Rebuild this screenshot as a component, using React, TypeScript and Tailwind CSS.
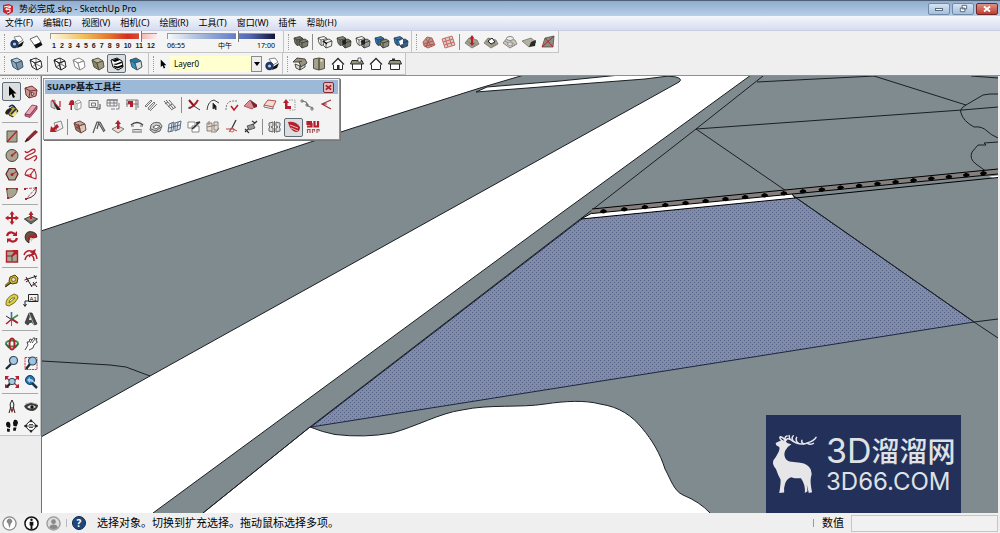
import { useState, type ReactNode } from "react";

const RED = "#b3202c";
const INK = "#2b2b2b";
const TAN = "#a9a48f";

type BoxProps = { fill?: string; top?: string; side?: string; stroke?: string };

function Box({ fill = "none", top = fill, side = fill, stroke = INK }: BoxProps) {
  return (
    <g stroke={stroke} strokeWidth="1" strokeLinejoin="round">
      <path d="M2 4 7 7 9 14 4 11Z" fill={fill} />
      <path d="M2 4 8 2 13 5 7 7Z" fill={top} />
      <path d="M7 7 13 5 14 11 9 14Z" fill={side} />
    </g>
  );
}

function Pair({ a, b, line = "#33362f" }: { a: string; b: string; line?: string }) {
  return (
    <g stroke={line} strokeWidth="0.8" strokeLinejoin="round">
      <path d="M1 4 7 2.500 10 4.500 10 10 4 11.500 2 9Z" fill={a} />
      <path d="M1 4 4 6 10 4.500M4 6V11" fill="none" />
      <path d="M6 7 12 5 15 7 14.500 12 9 14 6.500 11.500Z" fill={b} />
      <path d="M6 7 9 9 15 7M9 9V14" fill="none" />
    </g>
  );
}

function Terrain({ children, fill = "#a5a191" }: { children?: ReactNode; fill?: string }) {
  return (
    <g>
      <path d="M1 9 5 4 13 6 15 10 8 14Z" fill={fill} stroke="#6b675c" strokeWidth="0.7" />
      <path d="M3 7 11 12M5 4 13 11" stroke="#77736a" strokeWidth="0.6" />
      {children}
    </g>
  );
}

function House({ roof, door }: { roof: ReactNode; door?: boolean }) {
  return (
    <g>
      <path d="M3.500 8V13.500H12.500V8" fill="#fff" stroke={INK} />
      {roof}
      {door && <path d="M7 9h2.500v4.500H7z" fill={INK} />}
    </g>
  );
}

const icons: Record<string, ReactNode> = {
  dateShadow: (
    <g>
      <path d="M5 3 11 2 14 6 9 9Z" fill="#fff" stroke="#888" />
      <path d="M9 11 15 7 13 12 8 14Z" fill="#111" />
      <circle cx="5.500" cy="10" r="4.200" fill="#1f3864" />
      <circle cx="5.500" cy="10" r="1.600" fill="#b8cbe6" />
    </g>
  ),
  shadow: (
    <g>
      <path d="M2 5 9 2 13 8 7 12Z" fill="#fff" stroke="#666" />
      <path d="M6 11 13 8 14.500 11 8 14.500Z" fill="#111" />
    </g>
  ),
  xray: <Box fill="#8ea9bd" top="#b7cbd8" side="#7895ab" stroke="#40596c" />,
  backEdges: <g><Box fill="#fff" /><path d="M4 11 8 8 14 11M8 8V2" stroke={INK} strokeWidth="0.6" /></g>,
  wireframe: <g><Box /><path d="M4 11 9 8 14 11M9 8 8 2" stroke={INK} strokeWidth="0.7" fill="none" /></g>,
  hidden: <Box fill="#fff" stroke="#888" />,
  shaded: <Box fill="#88846b" top="#bdb99f" side="#9e9a80" stroke="#55523f" />,
  textured: (
    <g>
      <path d="M2 4 8 2 13 5 14 11 9 14 4 11Z" fill="#fff" stroke="#111" />
      <path d="M3 4.500 8 2.500 11 4 6 6ZM4 8 7 9 13 7 12.500 5.500 7.500 7.500ZM5 11 8.500 12.500 14 10.500V8.500L8.500 10.500 4.500 9.500Z" fill="#000" />
    </g>
  ),
  mono: <Box fill="#2f93c4" top="#2577a2" side="#d8ded8" stroke="#3a5565" />,
  pairShell: <Pair a="#74776a" b="#7c7f6e" />,
  pairWire: <g><Pair a="#fff" b="#eee" /><path d="M6 7 10 10" stroke="#111" strokeWidth="1.500" /></g>,
  pairUnion: <g><Pair a="#8b8d80" b="#73766a" /><path d="M6 7 10 5 10 10 7 11Z" fill="#222" /></g>,
  pairTrim: <g><Pair a="#fff" b="#999" /><path d="M6 7 10 5 10 10 7 11Z" fill="#222" /></g>,
  pairBlue: <Pair a="#2f7bc4" b="#8a8a78" />,
  pairSplit: <g><Pair a="#2f7bc4" b="#2e5f95" /><path d="M6 7 10 5 10 10 7 11Z" fill="#fff" /></g>,
  contours: (
    <g stroke="#b5443f" strokeWidth="0.8">
      <path d="M2 8 6 3 11 4 14 11 7 14 3 12Z" fill="#b89a90" />
      <path d="M3 10 12 7M4 12 13 10M5 5 11 13M9 4 5 13" fill="none" />
    </g>
  ),
  scratch: (
    <g stroke="#c05450" strokeWidth="0.8" fill="#dccbc2">
      <path d="M2 5 12 2 15 11 5 14Z" />
      <path d="M3 8 13 5M4 11 14 8M5 4 8 13M9 3 12 12" fill="none" />
    </g>
  ),
  smoove: <Terrain><path d="M8 1 10.500 4.500H9V9h1.500L8 12 5.500 9H7V4.500H5.500Z" fill={RED} /></Terrain>,
  stamp: <Terrain><path d="M5 7 9 4 12 8 8 10Z" fill="#fff" stroke="#222" /></Terrain>,
  drape: <Terrain fill="#cbc7bd"><ellipse cx="8" cy="4.500" rx="3.500" ry="2" fill="#eee" stroke="#888" /><path d="M5 10 8 8 11 10 8 12Z" fill="#ddd" stroke="#888" strokeWidth="0.7" /></Terrain>,
  detail: <g><path d="M1 7 10 4 15 8 8 13Z" fill="#b5b1a0" stroke="#666" strokeWidth="0.7" /><path d="M8 13 10 8 15 6 14 12Z" fill="#2a2a24" /></g>,
  flip: <g><path d="M2 13 5 4 14 2 13 13Z" fill="#8f8b80" stroke="#444" strokeWidth="0.7" /><path d="M2 13 14 2M5 4 13 13" stroke={RED} /></g>,
  iso: (
    <g stroke="#3b3b33" strokeWidth="0.9">
      <path d="M3 8 8 10V14L4 12ZM8 10 13 7V11L8 14Z" fill="#ddd" />
      <path d="M1 6 5 2 13 3 15 7 9 11 7 6Z" fill="#96927d" />
      <path d="M7 6 10 5" />
    </g>
  ),
  topView: <g><path d="M2.500 3 8 2V14L2.500 12.500ZM13.500 3 8 2V14L13.500 12.500Z" fill="#a5a28c" stroke="#56543f" /><path d="M9.500 3.500h2v2h-2z" fill="#eee" /></g>,
  front: <House door roof={<path d="M2 8.500 8 2.500 14 8.500" fill="#fff" stroke={INK} strokeWidth="1.300" />} />,
  right: <House roof={<g><path d="M1.500 8 3 4.500H13L14.500 8Z" fill="#98957f" stroke={INK} /><path d="M9 2h3v4H9z" fill="#fff" stroke={INK} strokeWidth="0.7" /></g>} />,
  back: <House roof={<path d="M2 8.500 8 2.500 14 8.500" fill="#fff" stroke={INK} strokeWidth="1.300" />} />,
  left: <House roof={<g><path d="M1.500 8 3 4.500H13L14.500 8Z" fill="#98957f" stroke={INK} /><path d="M5 2.500h3v2H5z" fill={INK} /></g>} />,
  select: <path d="M5 2V12L7.500 10 9 14 11 13 9.300 9.500H12.500Z" fill="#000" />,
  component: (
    <g stroke="#6e2528" strokeWidth="0.9">
      <path d="M2 4 9 2 14 6 13 12 6 14 3 11Z" fill="#c99a95" />
      <path d="M2 4 7 7 14 6M7 7 6 14" fill="none" />
      <path d="M8 8 11 9.500 9 12Z" fill="#fff" />
    </g>
  ),
  paint: (
    <g>
      <path d="M4 7 10 3 14 8 9 14 5 12Z" fill="#b5a53a" stroke="#222" />
      <path d="M1 10Q3 4 8 6L6 9 3 12Z" fill="#222" />
      <path d="M5 4Q9 0 11 5M7 11 12 6" stroke="#1c2b52" fill="none" strokeWidth="1.400" />
      <path d="M8 12 12 8 13 10 10 14Z" fill="#f2e78d" />
    </g>
  ),
  eraser: <g stroke="#7c3148" strokeWidth="0.8"><path d="M2 11 9 2 14 3 7 12Z" fill="#e8a5b5" /><path d="M2 11 7 12 14 3V6L7 14.500 2 13Z" fill="#c76883" /></g>,
  rect: <g><path d="M3 3h10v11H3z" fill={TAN} stroke="#55523f" /><path d="M3 14 13 3" stroke={RED} strokeWidth="1.200" /></g>,
  pencil: <g><path d="M2 14 4 10.500 12 2.500 14.500 4 6 12Z" fill="#a0222b" stroke="#4a1518" strokeWidth="0.7" /><path d="M2 14 4 10.500 6 12Z" fill="#222" /></g>,
  circle: <g><circle cx="8" cy="8.500" r="6" fill={TAN} stroke="#444" /><path d="M8 8.500 12 5" stroke={RED} strokeWidth="1.200" /><circle cx="8" cy="8.500" r="1.200" fill={RED} /></g>,
  freehand: <path d="M2 4Q3 7 7 4T12 3Q13 5 8 7T2 11Q3 14 8 11T13 9Q15 11 11 14" fill="none" stroke={RED} strokeWidth="1.300" />,
  polygon: <g><path d="M5 2.500H11L14 8 11 14H5L2 8Z" fill={TAN} stroke="#5d2727" strokeWidth="1.200" /><path d="M8 8.500 12 6" stroke={RED} /><circle cx="8" cy="8.500" r="1.500" fill={RED} /></g>,
  arc: <g fill="none" stroke={RED} strokeWidth="1.100"><path d="M2 9Q3 3 8 2.500Q14 3 13 13M2 9 13 13M2 9 7 9 12 3M8 8V11" /></g>,
  pie: <g><path d="M2.500 3.500H13.500Q13 12 4 13.500Z" fill={TAN} stroke="#6d5a4a" /><path d="M2 3h2v2H2zM12 3h2v2h-2zM3 12h2v2H3z" fill={RED} /></g>,
  arc2: <g fill="none" stroke={RED}><path d="M13 3Q15 11 3 14" stroke="#333" /><path d="M2 3.500 13 3 3 14" strokeDasharray="3 1" strokeWidth="0.8" /><path d="M12 2h2v2h-2zM2 13h2v2H2zM1 3h2v2H1z" fill={RED} stroke="none" /></g>,
  move: <path d="M8 1 10.500 4.500H5.500ZM8 15 5.500 11.500H10.500ZM1 8 4.500 5.500V10.500ZM15 8 11.500 10.500V5.500ZM7 4h2v8H7zM4 7h8v2H4z" fill={RED} />,
  pushpull: <g><path d="M1.500 9 8 6 14.500 9 8 14Z" fill="#918e7a" stroke="#444" /><path d="M1.500 9 8 12 14.500 9M8 12v2" fill="none" stroke="#444" strokeWidth="0.8" /><path d="M8 1 10.500 5H9V9H7V5H5.500Z" fill={RED} /></g>,
  rotate: <g fill="none" stroke={RED} strokeWidth="2.200"><path d="M3 7Q4 3 8 3.500L11 5M13 9Q12 13 8 12.500L5 11" /><path d="M13 2V7H8.500ZM3 14V9.500H7.500Z" fill={RED} stroke="none" /></g>,
  follow: <g><path d="M2 8Q3 1 10 3Q14 4 14 8L9 9Q8 5 6 9V14Q2 12 2 8Z" fill="#6b5344" stroke="#2b211c" strokeWidth="0.8" /><path d="M5 10Q6 5 10 6L11 4 14 8 10 10V8Q8 7 7 11Z" fill={RED} /><path d="M7 9 11 9 8 13Z" fill="#cfcbb9" /></g>,
  scale: <g><path d="M2.500 3h11v11h-11z" fill={TAN} stroke={RED} strokeWidth="1.400" /><path d="M3 8H8V13" fill="none" stroke="#444" /><path d="M14 2V8L12 6 8 9 7 8 10 4 8 2Z" fill={RED} /></g>,
  offset: <g fill="none" stroke={RED} strokeWidth="1.500"><path d="M1 7Q3 2 8 3T14 11M2 12Q3 7 7 7T11 13" /><path d="M6 9 10 5M8 4 12 2 11 6Z" fill={RED} strokeWidth="1.200" /></g>,
  tape: <g><path d="M6 4 11 2 14 5 13 10 8 11 5 8Z" fill="#c9b23b" stroke="#4e4415" /><circle cx="9.500" cy="6.500" r="2" fill="#eee3a0" stroke="#544" strokeWidth="0.7" /><path d="M6 9 1.500 13" stroke="#8c7a22" strokeWidth="2.500" /><path d="M1 14 7 10" stroke="#222" /></g>,
  dimension: <g stroke="#222" fill="none" strokeWidth="1"><path d="M3 4 9 14M1.500 7 14 3M3 9 6 7M8 13 14 9M11 2 13 6M10 9 14 14" /><path d="M3 6 5 6M11 10V13" stroke={RED} /></g>,
  protractor: <path d="M2 13Q1 6 10 2Q15 3 14 6Q12 11 5 14ZM5 11 11 6 8 6Q5 8 5 11Z" fill="#dccf43" fillRule="evenodd" stroke="#5d5619" strokeWidth="0.8" />,
  label: <g><path d="M5.500 2.500h9.500v7H5.500zM5 9H2V14M0.500 12 2 14.500 3.500 12" fill="none" stroke="#222" /><text x="6.500" y="8.500" fontSize="6" className="font-['Liberation_Sans']" fill="#111">A1</text></g>,
  axes: <g strokeWidth="1.600"><path d="M7.500 9V1" stroke="#3873a5" /><path d="M2 5 13 12" stroke="#2a2a2a" strokeWidth="1" /><path d="M8 8 14 4" stroke="#2f9a47" /><path d="M8 8 2 13M8 8 14 12" stroke={RED} /><path d="M7.500 15V9" stroke="#3873a5" strokeWidth="1" /></g>,
  text3d: <g><path d="M2 12 6 2 9 2 14 13 11 14 9 11 6 12 5 14Z" fill="#4a4a4a" stroke="#222" strokeWidth="0.7" /><path d="M6 9 7 5 9 9Z" fill="#eee" /><path d="M6 2 11 14" stroke="#aaa" /></g>,
  orbit: <g fill="none" strokeWidth="2"><ellipse cx="8" cy="7.500" rx="6" ry="3" stroke="#3e8d46" /><ellipse cx="8" cy="8" rx="2.500" ry="5.500" stroke={RED} /><path d="M2 8 5 12M11 12 14 8" stroke="#26663a" strokeWidth="1.300" /></g>,
  pan: <path d="M2 14 5 9 4 6 6 6 7 3 9 4 11 1.500 12 3 14 2.500 13 5 14.500 6 11 9 10 12 6 14M7 7 9 4M9 7 12 3" fill="#fff" stroke="#222" strokeWidth="0.8" />,
  zoom: <g><path d="M2 14 7 9" stroke="#202b39" strokeWidth="2.400" /><circle cx="9.500" cy="5.500" r="4" fill="#a6c8e2" stroke="#33475b" strokeWidth="1.200" /></g>,
  zoomWindow: <g><path d="M2 2.500h12v12H2z" fill="none" stroke="#d3343d" strokeDasharray="2 0.700" /><path d="M3 14 7 9" stroke="#202b39" strokeWidth="2.400" /><circle cx="9.500" cy="6" r="4" fill="#9dc3df" stroke="#33475b" strokeWidth="1.200" /></g>,
  extents: <g><path d="M1 2 5 2 3.500 4 6 6 5 7 3 5 1 6ZM15 2 11 2 12.500 4 10 6 11 7 13 5 15 6ZM1 14 5 14 3.500 12 6 10 5 9 3 11 1 10ZM15 14 11 14 12.500 12 10 10 11 9 13 11 15 10Z" fill={RED} /><circle cx="8" cy="7.500" r="3.200" fill="#a6c8e2" stroke="#33475b" /><path d="M3 13 6 10" stroke="#222" strokeWidth="1.800" /></g>,
  previous: <g><circle cx="7" cy="6" r="4.500" fill="#2674ae" stroke="#163b5c" /><path d="M9 9 14 14" stroke="#173450" strokeWidth="2.500" /><path d="M4 6 7 3V5Q11 5 11 9Q9 7 7 7.500V9Z" fill="#a5d1ed" /></g>,
  position: <g fill="none" stroke="#222"><path d="M8 1Q11 5 9.500 9H6.500Q5 5 8 1Z" fill="#eee" /><path d="M6.500 9 5 14M9.500 9 11 14" /><path d="M6 10 8 14 10 10Z" fill={RED} stroke="none" /></g>,
  look: <g><path d="M1 7Q7 1 15 6Q15 10 10 12Q3 12 1 7Z" fill="#3a3a38" /><path d="M4 8Q9 4 13 8Q8 11 4 8Z" fill="#e5e5e0" /><circle cx="9" cy="8" r="1.700" fill="#111" /><path d="M2 5Q8 2 14 5" stroke="#bbb" fill="none" /></g>,
  walk: <g fill="#111"><path d="M3 4Q6 3 6.500 7L6 10 3 9Q1 6 3 4ZM3 10.500 6 11 5.500 14 3 13.500ZM10 2Q13.500 1 14 5L12.500 8.500 9.500 8Q8.500 4 10 2ZM9.500 9.500H12.500L11.500 13 9 12.500Z" /></g>,
  section: <g fill="none" stroke="#222"><circle cx="8" cy="8" r="4.500" fill="#fff" /><path d="M8 1 10 3.500H6ZM8 15 10 12.500H6ZM1 8 3.500 6V10ZM15 8 12.500 6V10Z" fill="#222" stroke="none" /><path d="M1 8H15M6 6.500H10M6 9.500H10" strokeWidth="0.8" /></g>,
  suDraw: <g><path d="M3 4 7 3 7 12 3 10Z" fill="#ccc" stroke="#666" strokeWidth="0.7" /><path d="M4 3 12 12M12 4V10" stroke={RED} strokeWidth="1.200" /><path d="M5 5 13 13 9 13Z" fill="#222" /></g>,
  suPull: <g><path d="M3 4Q5 2 7 4V8H5V13H3.500V8L1.500 8Z" fill={RED} /><path d="M8 5 12 3 14 5V11L10 13 8 12ZM8 5 10 7 14 5M10 7V13" fill="#fff" stroke="#999" /></g>,
  suOffset: <g fill="none" stroke="#777"><path d="M3 3.500h9v7H3zM5.500 6h4v3h-4z" /><path d="M10 12H14V7" stroke="#444" /></g>,
  suGrid: <g fill="none" stroke="#777" strokeWidth="0.9"><path d="M2 3H12V9H2ZM2 6H12M5 3V9M9 3V9M11 12H14V6M6 12H10" /><path d="M2 3H13" stroke="#7b8699" strokeWidth="1.500" /></g>,
  suRail: <g stroke="#777" fill="none"><path d="M2 3H14M2 7H14M3 3V10M12 3V13M14 3V11" /><path d="M4 4H9V10H6V7H4Z" fill={RED} stroke="none" /></g>,
  suStair: <g stroke="#777" fill="#e8e8e8"><path d="M2 9 8 3 9 4 3 10ZM5 11 11 5 12 6 6 13ZM7 14 14 7" /></g>,
  suSteps: <path d="M2 4 9 12M4 3 11 11M7 3 13 10M3 7 6 5M6 10 10 7M9 13 14 10" fill="none" stroke="#666" />,
  suTrim: <g fill="none"><path d="M3 11Q8 10 12 3" stroke={RED} strokeWidth="2" /><path d="M3 3 8 9" stroke="#8f1820" strokeWidth="2" /><path d="M8 9 14 13M2 11 5 11" stroke="#444" /></g>,
  suArc: <g fill="none" stroke="#444"><path d="M2 13Q3 4 9 3L14 6" /><path d="M8 6V12L9.500 11 11 13 11 9Z" fill="#111" /></g>,
  suFillet: <g fill="none"><path d="M2 13Q2 4 9 4H13" stroke="#777" strokeDasharray="2 1" /><path d="M7 9 10 13 14 8" stroke={RED} strokeWidth="1.500" /></g>,
  suRoof: <g><path d="M1 9 7 3 14 8 9 12Z" fill="#dd8d95" stroke="#a13c43" strokeWidth="0.8" /><path d="M7 3 11 11 14 10 14 8Z" fill="#702a2d" /></g>,
  suFace: <g><path d="M2 8 6 3 14 4 11 10Z" fill="#f3dad2" stroke="#b0504a" /><path d="M2 8V10L11 12V10" fill="none" stroke="#777" /></g>,
  suUp: <g><path d="M8 3H14V13H8" fill="none" stroke="#999" strokeDasharray="1.500 1" /><path d="M2 6 5 2 8 6H6.500V9H10V12H4V6Z" fill={RED} /></g>,
  suWeld: <g fill="none" stroke="#777"><path d="M2 4 6 5 8 9 13 11" strokeWidth="1.200" /><path d="M1 3h2v2H1zM6 7h2v2H6zM11 11h2v2h-2z" stroke="#666" strokeWidth="0.8" /></g>,
  suOpen: <path d="M12 3 3 7 12 12M3 7 8 7" fill="none" stroke="#9f3438" strokeWidth="1.200" />,
  suBack: <g><path d="M6 4 13 2 15 9 9 12Z" fill="#eee" stroke="#888" /><path d="M2 13 3 7 5 9 9 5 11 8 7 11 9 13Z" fill={RED} /></g>,
  suBox: <g><Box fill="#907f6c" top="#c9a5a0" side="#d8c8b5" stroke="#6d4842" /><path d="M4 8 8 10 6 5" stroke="#8b2d30" fill="none" /></g>,
  suLines: <path d="M2 14 6 3 8 3 6 10M7 3 13 13M9 3 14 12" fill="none" stroke="#555" strokeWidth="1.200" />,
  suDrop: <g><path d="M2 10 8 7 14 10 8 14Z" fill="#e3ded0" stroke="#777" /><path d="M8 1 11 5H9.500V10H7V5H5Z" fill={RED} /></g>,
  suBridge: <g fill="none" stroke="#444"><path d="M2 6Q8 1 14 6" strokeWidth="1.500" /><path d="M2 7H5M11 7H14M3 11Q8 10 13 11M3 13H13" strokeWidth="0.8" /></g>,
  suTorus: <g stroke="#555" fill="#ccc" strokeWidth="0.9"><path d="M3 6Q6 2 12 4L14 7 12 12 6 14 2 11Z" /><path d="M5 8Q8 5 12 7L8 10Z" fill="#fff" /><path d="M3 10 8 12 13 8" fill="none" /></g>,
  suMesh: <path d="M2 5 7 3 6 12 1 13ZM8 4 14 2 13 10 8 12ZM2 9 13 6M5 4 4 12M11 3 10 11" fill="#e6eaef" stroke="#4b6078" strokeWidth="0.900" />,
  suCopy: <g fill="#fff" stroke="#888"><path d="M2 3h7v6H2zM6 7h7v6H6z" /><path d="M6 10 14 3M14 3 10 4" stroke="#333" strokeWidth="1.400" /></g>,
  suArray: <path d="M2 4h5v8H2zM9 3h4v8H9zM4 2V6M2 8 12 6M6 13H11L14 9" fill="#e5ddd5" stroke="#8b8179" />,
  suAxis: <g fill="none"><path d="M12 1 8 9" stroke="#333" strokeWidth="1.300" /><path d="M2 10H9L13 12M8 9 5 13" stroke="#b54742" /><circle cx="8" cy="11" r="2" stroke="#b54742" strokeWidth="0.8" /></g>,
  suBolt: <g stroke="#333"><path d="M2 13 13 3M9 2 12 4 14 2M2 10 6 14" fill="none" strokeWidth="1.200" /><path d="M4 7 10 5 12 9 6 11Z" fill="#999" strokeWidth="0.7" /></g>,
  suMirror: <path d="M7.500 2V14M2 4 6 3V7L4 8 6 9V13L2 12V9L3 8 2 7ZM9 3 13 4V7L12 8 13 9V12L9 13V9L11 8 9 7Z" fill="#ddd" stroke="#666" />,
  suHide: <g><path d="M2 3Q10 2 14 8Q14 13 10 13Q4 12 2 3Z" fill={RED} /><path d="M4 6 12 9M5 9 12 12" stroke="#f1bcbc" fill="none" /></g>,
  suApp: <g><path d="M7 3H2.500V5H6.500V7.500H2M9.500 2V7.500H13V2" fill="none" stroke={RED} strokeWidth="2.200" /><path d="M2.500 14V10.500H5V14M7.500 14V10.500H9.500V12.500M12 14V10.500H14V12.500" fill="none" stroke="#a55" strokeWidth="1.200" /></g>,
};

function Icon({ name }: { name: string }) {
  return (
    <svg viewBox="0 0 16 16" className="size-4 shrink-0" fill="none" aria-hidden="true">
      {icons[name]}
    </svg>
  );
}

// "|" in a tool list is a separator
function Tools({ names, active }: { names: string[]; active?: string }) {
  return (
    <>
      {names.map((name, i) =>
        name === "|" ? (
          <span key={i} className="mx-0.5 h-4 w-px shrink-0 bg-[#8c8c8c]" />
        ) : (
          <button
            key={i}
            type="button"
            aria-label={name}
            className={
              name === active
                ? "flex size-[19px] shrink-0 items-center justify-center rounded-xs border border-[#5f6b75] bg-[#dcdddf]"
                : "flex size-[19px] shrink-0 items-center justify-center"
            }
          >
            <Icon name={name} />
          </button>
        )
      )}
    </>
  );
}

function Toolbar({ children }: { children: ReactNode }) {
  return (
    <div className="flex h-[22px] items-center border-r border-b border-[#c4c4c4] bg-[#f4f4f4] pr-px">
      <span className="mr-0.5 ml-1 h-4 w-px border-l border-dotted border-[#9a9a9a]" />
      {children}
    </div>
  );
}

const thumb =
  "[&::-webkit-slider-thumb]:h-[11px] [&::-webkit-slider-thumb]:w-[3px] [&::-webkit-slider-thumb]:appearance-none [&::-webkit-slider-thumb]:border-r [&::-webkit-slider-thumb]:border-[#777] [&::-webkit-slider-thumb]:bg-white";

function ShadowSliders() {
  const [month, setMonth] = useState(85);
  const [hour, setHour] = useState(65);

  return (
    <>
      <div className="ml-[5px] w-[107px]">
        <input
          type="range"
          aria-label="日期"
          value={month}
          onChange={(e) => setMonth(Number(e.target.value))}
          className={`block h-[6px] w-full appearance-none border-t border-l border-[#999] bg-[linear-gradient(90deg,#fdf8e6,#efc260_30%,#e2762f_55%,#d5301f_72%,#dc4a3c_84%,#f3b9b6_86%,#fbeeee)] ${thumb}`}
        />
        <div className="flex justify-between px-0.5 pt-[3px] font-['Liberation_Sans'] text-[7px] leading-[8px] font-bold text-[#222]">
          {Array.from({ length: 12 }, (_, i) => (
            <span key={i}>{i + 1}</span>
          ))}
        </div>
      </div>
      <div className="ml-[10px] w-[108px]">
        <input
          type="range"
          aria-label="时间"
          value={hour}
          onChange={(e) => setHour(Number(e.target.value))}
          className={`block h-[6px] w-full appearance-none border-t border-l border-[#999] bg-[linear-gradient(90deg,#f5f8fb,#a8bbd9_30%,#6b82cb_60%,#5668b4_76%,#10143a)] ${thumb}`}
        />
        <div className="flex justify-between pt-[3px] text-[7px] leading-[8px] text-black">
          <span>06:55</span>
          <span className="pl-2">中午</span>
          <span>17:00</span>
        </div>
      </div>
      <span className="w-[7px]" />
    </>
  );
}

const sideGroups = [
  ["select", "component", "paint", "eraser"],
  ["rect", "pencil", "circle", "freehand", "polygon", "arc", "pie", "arc2"],
  ["move", "pushpull", "rotate", "follow", "scale", "offset"],
  ["tape", "dimension", "protractor", "label", "axes", "text3d"],
  ["orbit", "pan", "zoom", "zoomWindow", "extents", "previous"],
  ["position", "look", "walk", "section"],
];

function SideBar() {
  return (
    <aside className="w-[42px] shrink-0 border-r border-[#6c7479] bg-[#ededed]">
      <div className="border-r border-b border-[#c4c4c4] bg-[#f4f4f4] pt-0.5 pl-0.5">
        <div className="mr-0.5 mb-[3px] h-px border-t border-dotted border-[#9a9a9a]" />
        {sideGroups.map((group, i) => (
          <div key={i}>
            {i > 0 && <div className="my-0.5 mr-0.5 h-0.5 border-t border-[#a9a9a9]" />}
            <div className="grid grid-cols-[19px_19px]">
              <Tools names={group} active="select" />
            </div>
          </div>
        ))}
      </div>
    </aside>
  );
}

const suappRows = [
  ["suDraw", "suPull", "suOffset", "suGrid", "suRail", "suStair", "suSteps", "|", "suTrim", "suArc", "suFillet", "suRoof", "suFace", "suUp", "suWeld", "suOpen"],
  ["suBack", "|", "suBox", "suLines", "suDrop", "suBridge", "suTorus", "suMesh", "suCopy", "suArray", "suAxis", "suBolt", "|", "suMirror", "suHide", "suApp"],
];

function SuappPanel() {
  return (
    <section className="absolute top-0.5 left-px border border-[#8d9296] bg-[#f3f3f3] p-px shadow-[1px_1px_0_#777]">
      <header className="flex h-[14px] items-center justify-between bg-[#9db9d8] pr-1 pl-0.5">
        <h2 className="text-[9px] leading-[14px] font-bold text-[#101828]">SUAPP基本工具栏</h2>
        <button type="button" aria-label="关闭" className="flex size-[11px] items-center justify-center rounded-xs border border-[#7d2f35] bg-[#e5b9b9]">
          <svg viewBox="0 0 8 8" className="size-[7px]"><path d="M1 1.500 7 6.500M7 1.500 1 6.500" stroke="#a1222b" strokeWidth="2" /></svg>
        </button>
      </header>
      {suappRows.map((row, i) => (
        <div key={i} className="flex h-[22px] items-center pr-0.5 pl-px">
          <Tools names={row} active="suHide" />
        </div>
      ))}
    </section>
  );
}

const posts = Array.from({ length: 21 }, (_, i) => {
  const x = 603 + i * 20.9 - i * i * 0.095;
  return { x, y: 211 - (x - 603) * 0.1 };
});

function Scene() {
  return (
    <svg viewBox="42 76 956 437" preserveAspectRatio="xMinYMin slice" className="absolute inset-0 size-full" aria-hidden="true">
      <defs>
        <pattern id="dots" width="4" height="4" patternUnits="userSpaceOnUse">
          <rect width="4" height="4" fill="#808ca6" />
          <rect width="1" height="1" fill="#586389" />
          <rect x="2" y="2" width="1" height="1" fill="#586389" />
        </pattern>
      </defs>
      <rect x="42" y="76" width="956" height="437" fill="#808b90" />
      <g fill="#fff" stroke="#1a1f22" strokeWidth="1" strokeLinejoin="round">
        <path d="M41 75V231L350 129 480 88 524 75Z" />
        <path d="M476 92 487 87 560 81 620 75H676L645 79 560 85.500Z" />
        <path d="M41 437 150 376 679 82Q683 79 676 77L660 75H751L560 214 153 513V520H41Z" />
        <path d="M310 427Q322 432 335 434.500Q365 438 392 433C415 427 440 413 462 410C490 404 520 408 545 404C565 401 585 400 600 404C620 407 632 416 642 428C652 440 660 453 665 469C671 480 674 491 683 495Q700 502 710 513V520H200L203 513Z" />
      </g>
      <path d="M583 218 795 197 974 322 311 427Z" fill="url(#dots)" stroke="#1d2540" />
      <g fill="none" stroke="#1a1f22" strokeWidth="1">
        <path d="M763 76 696 129 583 217 310 427 203 513" />
        <path d="M696 129 795 197 974 322 998 338M974 322 998 319" />
        <path d="M696 129 962 110 998 107M757 82 875 76M874 76 966 105M971 76 998 78" />
        <path d="M998 94H990L983 95 966 105Q959 109 961 113 963 121 974 127 982 126 987 131 991 135 998 138" />
        <path d="M998 142 984 143 986 145 978 145 972 152Q969 159 976 164L987 172" />
        <path d="M42 361 110 365 126 367 150 376" />
      </g>
      <path d="M592 209 998 169V174L590 214Z" fill="#85807d" />
      <path d="M581 219 591 213.500 792 194 795 198Z" fill="#fff" />
      <path d="M989 176.500 998 175.500V178L993 178Z" fill="#fff" />
      <g fill="none" stroke="#000" strokeWidth="1">
        <path d="M592 209 998 169M592 213.500 998 174M581 219 795 198 998 177.500M581 219 592 213M792 194 795 198" />
      </g>
      <g fill="#000">
        {posts.map((p) => (
          <path key={p.x} d={`M${p.x - 3} ${p.y}l3-2 3 1 1 1.500-3 2-3-.5z`} />
        ))}
      </g>
    </svg>
  );
}

function Watermark() {
  return (
    <div className="absolute right-[37px] bottom-0 flex h-[98px] w-[195px] items-center gap-2 bg-[#22305a] pl-1.5 text-[#dfe1e5]">
      <svg viewBox="66 96 140 186" className="h-[62px] w-[46px] shrink-0" fill="#e6e6e8" aria-hidden="true">
        <path d="M77 125 90 119 98 116 106 120 114 126 125 129 114 137 107 147Q100 160 107 172Q112 181 126 182L152 185Q176 188 184 206Q189 218 184 232Q182 246 188 275L178 277 172 252 174 272 166 277Q168 250 154 232Q140 234 124 229Q110 234 106 248Q101 262 103 276L88 277Q93 250 92 236Q84 222 78 204Q66 190 70 178Q78 168 84 156Q91 143 88 137L79 132Z" />
        <g fill="none" stroke="#e6e6e8" strokeWidth="4.500" strokeLinecap="round">
          <path d="M106 120Q112 107 123 115Q150 136 176 124Q194 118 200 108" />
          <path d="M96 118Q86 108 92 106Q104 110 106 120M108 118Q102 106 112 104M120 114 118 102M130 119Q124 108 131 103M146 126Q136 118 141 108M162 128Q154 122 157 117M174 126Q182 132 192 126" />
        </g>
      </svg>
      <div className="whitespace-nowrap">
        <div className="flex items-center leading-[34px]">
          <span className="font-['Inter'] text-[34px]">3D</span>
          <span className="text-[28px] font-medium">溜溜网</span>
        </div>
        <div className="mt-0.5 font-['Inter'] text-[24px] leading-[24px]">3D66.COM</div>
      </div>
    </div>
  );
}

const menus = ["文件(F)", "编辑(E)", "视图(V)", "相机(C)", "绘图(R)", "工具(T)", "窗口(W)", "插件", "帮助(H)"];

const winButton = "flex h-3 w-[22px] items-center justify-center rounded-xs border border-[#6f8aa8] bg-linear-to-b from-[#d5e3f2] to-[#a5bfdb]";

export default function App() {
  const [layer, setLayer] = useState("Layer0");

  return (
    <div className="flex h-screen flex-col overflow-hidden bg-[#efefef] font-['Noto_Sans','Noto_Sans_CJK_SC',sans-serif] text-black">
      <header className="flex h-4 shrink-0 items-center justify-between border-t border-[#4f6076] bg-linear-to-b from-[#8fadd0] to-[#b7cfe8] pl-0.5">
        <div className="flex items-center gap-1">
          <svg viewBox="0 0 12 12" className="size-3" aria-hidden="true">
            <path d="M1 2 7 1 11 3V9L6 12 1 9Z" fill="#c9252d" />
            <path d="M2 4 7 3 9 4 4 5.500V7L8 6V9L5 10" fill="none" stroke="#fff" strokeWidth="1" />
          </svg>
          <h1 className="pl-px text-[9px] leading-[14px]">势必完成.skp - SketchUp Pro</h1>
        </div>
        <div className="flex gap-0.5 pr-0.5">
          <button type="button" aria-label="最小化" className={winButton}>
            <span className="mt-0.5 h-[3px] w-2 border border-[#5c6b7d] bg-white" />
          </button>
          <button type="button" aria-label="还原" className={winButton}>
            <svg viewBox="0 0 10 10" className="size-[9px]"><path d="M3.500 1.500h5v4h-5zM1.500 4.500h5v4h-5z" fill="#fff" stroke="#4f5f73" /></svg>
          </button>
          <button type="button" aria-label="关闭" className="flex h-3 w-[22px] items-center justify-center rounded-xs border border-[#70262a] bg-linear-to-b from-[#dc9186] to-[#bf3a2f]">
            <svg viewBox="0 0 8 8" className="size-2"><path d="M1 1.500 7 6.500M7 1.500 1 6.500" stroke="#fff" strokeWidth="1.800" /></svg>
          </button>
        </div>
      </header>

      <nav className="flex h-[15px] shrink-0 items-center gap-[10px] border-b border-[#c9cfdf] bg-linear-to-b from-[#f5f7fc] to-[#d6ddf0] pl-[5px]">
        {menus.map((m) => (
          <button key={m} type="button" className="text-[9px] leading-[14px]">{m}</button>
        ))}
      </nav>

      <div className="flex h-[22px] shrink-0">
        <Toolbar>
          <Tools names={["dateShadow", "shadow"]} />
          <ShadowSliders />
        </Toolbar>
        <Toolbar><Tools names={["pairShell", "|", "pairWire", "pairUnion", "pairTrim", "pairBlue", "pairSplit"]} /></Toolbar>
        <Toolbar><Tools names={["contours", "scratch", "|", "smoove", "stamp", "drape", "detail", "flip"]} /></Toolbar>
      </div>

      <div className="flex h-[22px] shrink-0">
        <Toolbar>
          <Tools names={["xray", "backEdges", "|", "wireframe", "hidden", "shaded", "textured", "mono"]} active="textured" />
          <span className="w-0.5" />
        </Toolbar>
        <Toolbar>
          <svg viewBox="0 0 16 16" className="mx-px size-3" aria-hidden="true">{icons.select}</svg>
          <div className="relative flex w-[92px]">
            <select
              aria-label="图层"
              value={layer}
              onChange={(e) => setLayer(e.target.value)}
              className="h-4 w-full appearance-none bg-[#ffffd0] pl-1 text-[8px] leading-[16px]"
            >
              <option>Layer0</option>
            </select>
            <span className="pointer-events-none absolute inset-y-0 right-0 flex w-[11px] items-center justify-center border border-[#8a8a8a] bg-[#eee]">
              <svg viewBox="0 0 6 4" className="h-1 w-1.5"><path d="M0 0H6L3 4Z" /></svg>
            </span>
          </div>
          <Tools names={["dateShadow"]} />
        </Toolbar>
        <Toolbar><Tools names={["iso", "topView", "front", "right", "back", "left"]} /></Toolbar>
      </div>

      <main className="flex min-h-0 flex-1 border-t border-[#8b9194] pr-0.5">
        <SideBar />
        <div className="relative min-w-0 flex-1 overflow-hidden">
          <Scene />
          <SuappPanel />
          <Watermark />
        </div>
      </main>

      <footer className="flex h-5 shrink-0 items-center justify-between pr-0.5 pl-0.5">
        <div className="flex items-center">
          <div className="flex items-center gap-[7px]">
            <svg viewBox="0 0 16 16" className="size-[15px]" aria-hidden="true">
              <circle cx="8" cy="8" r="7" fill="#fff" stroke="#888" strokeWidth="1.400" />
              <path d="M8 13 6.500 8A2.800 2.800 0 1 1 9.500 8Z" fill="#888" />
            </svg>
            <svg viewBox="0 0 16 16" className="size-[15px]" aria-hidden="true">
              <circle cx="8" cy="8" r="7" fill="#fff" stroke="#111" strokeWidth="1.600" />
              <circle cx="8" cy="4" r="1.300" fill="#111" />
              <path d="M6 6h4v4H9v4H7v-4H6z" fill="#111" />
            </svg>
            <svg viewBox="0 0 16 16" className="size-[15px]" aria-hidden="true">
              <circle cx="8" cy="8" r="7" fill="#ddd" stroke="#999" strokeWidth="1.400" />
              <circle cx="8" cy="6" r="2.500" fill="#888" />
              <path d="M3.500 12.500Q4 9 8 9T12.500 12.500Q8 15.500 3.500 12.500Z" fill="#888" />
            </svg>
          </div>
          <span className="mx-[5px] h-2 w-px bg-[#bbb]" />
          <button type="button" className="flex size-[14px] items-center justify-center rounded-full border border-[#0f2748] bg-[#20477c] text-[10px] leading-[12px] font-bold text-white">?</button>
          <p className="pl-[11px] text-[11px] leading-[18px]">选择对象。切换到扩充选择。拖动鼠标选择多项。</p>
        </div>
        <div className="flex items-center">
          <span className="mr-2 h-2 w-px bg-[#999]" />
          <label htmlFor="measure" className="pr-[7px] text-[11px] leading-[18px]">数值</label>
          <input id="measure" className="h-[17px] w-[147px] border border-[#c0c7d3] bg-[#f1f1f1] px-1 text-[11px]" />
        </div>
      </footer>
    </div>
  );
}
